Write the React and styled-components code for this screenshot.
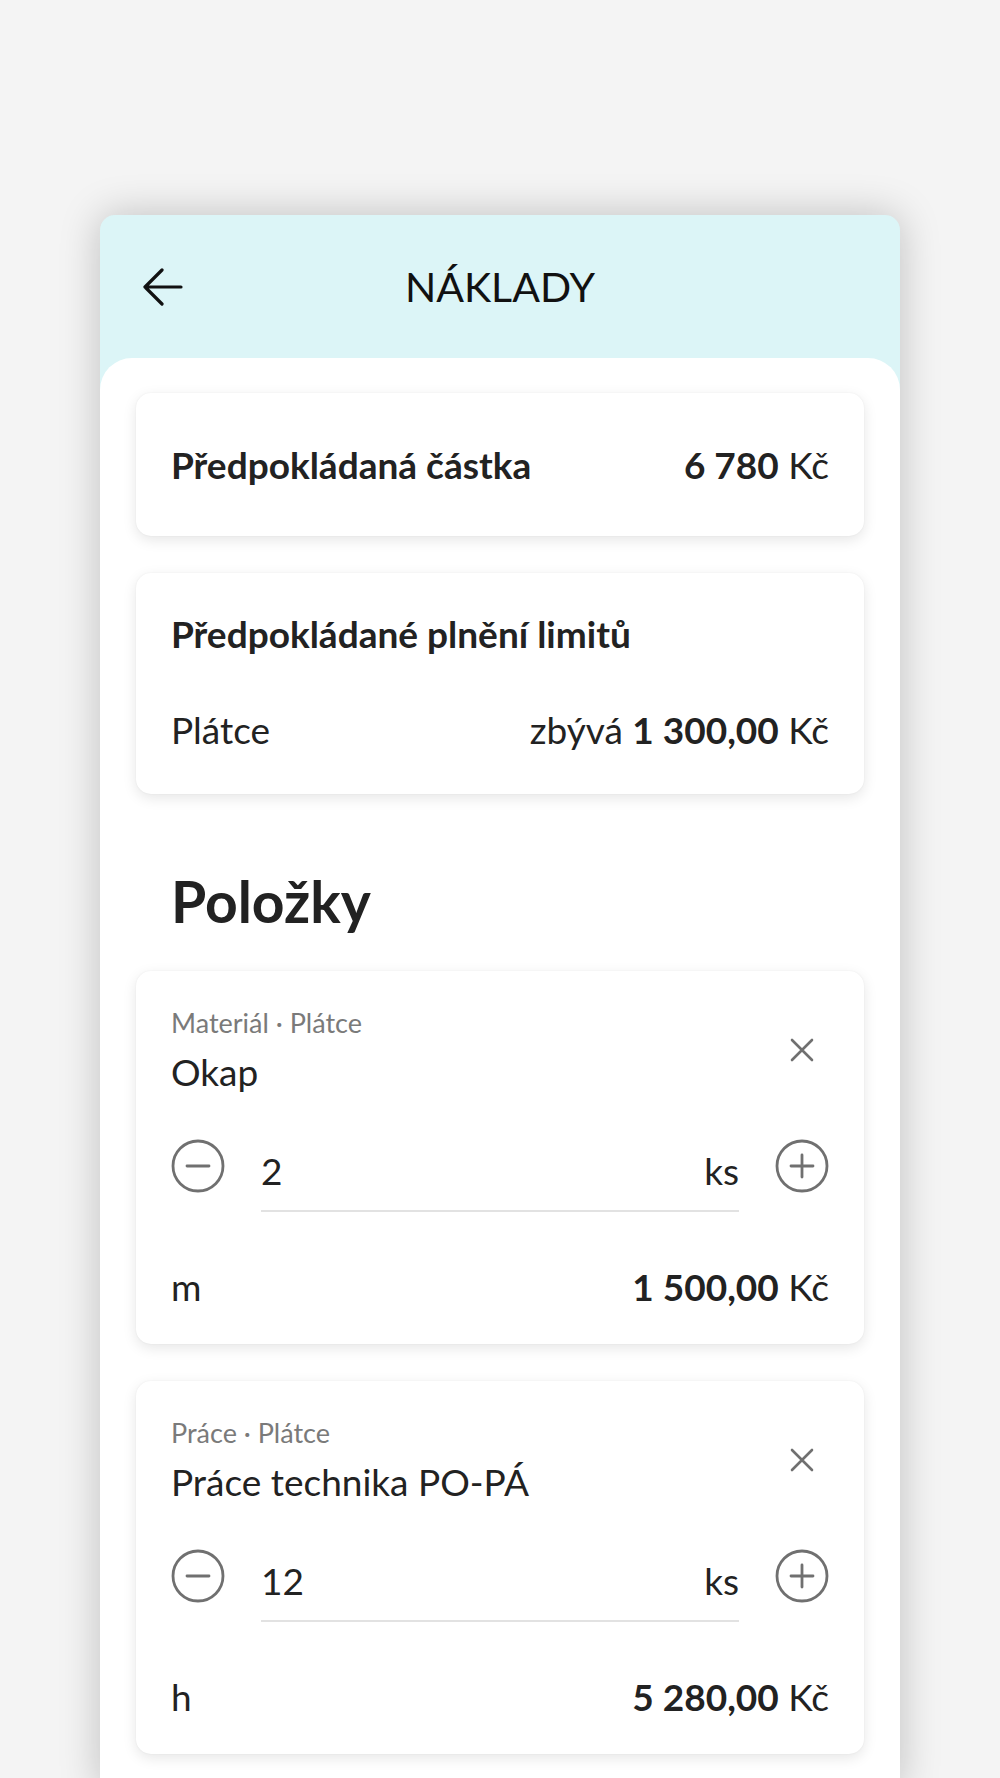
import React from 'react';
import styled, { createGlobalStyle } from 'styled-components';

const GlobalStyle = createGlobalStyle`
  html, body {
    margin: 0;
    padding: 0;
    background: #f4f4f4;
    font-family: Lato, "Noto Sans", sans-serif;
    color: #222;
  }
  * { box-sizing: border-box; }
`;

const Page = styled.div`
  padding-top: 215px;
  height: 1778px;
  overflow: hidden;
`;

const Phone = styled.div`
  width: 800px;
  margin: 0 auto;
  min-height: 1563px;
  background: #dcf5f7;
  border-radius: 15px 15px 0 0;
  box-shadow: 0 0 40px rgba(0, 0, 0, 0.22);
  display: flex;
  flex-direction: column;
`;

const Header = styled.header`
  height: 143px;
  display: flex;
  align-items: center;
  position: relative;
  padding: 0 43px;
`;

const BackButton = styled.button`
  border: none;
  background: none;
  padding: 0;
  display: flex;
  cursor: pointer;
`;

const Title = styled.h1`
  position: absolute;
  left: 0;
  right: 0;
  margin: 0;
  text-align: center;
  font-size: 41px;
  line-height: 48px;
  font-weight: 400;
  color: #111;
  pointer-events: none;
`;

const Sheet = styled.main`
  flex: 1;
  background: #fff;
  border-radius: 32px 32px 0 0;
  padding: 35px 36px;
  display: flex;
  flex-direction: column;
  gap: 37px;
`;

const Card = styled.section`
  background: #fff;
  border-radius: 15px;
  box-shadow: 0 4px 14px rgba(0, 0, 0, 0.1), 0 0 2px rgba(0, 0, 0, 0.06);
  padding: ${p => p.pad || '0 35px'};
`;

const Row = styled.div`
  display: flex;
  justify-content: space-between;
  align-items: center;
  font-size: 37px;
  line-height: ${p => p.lh || 40}px;
  margin-top: ${p => p.mt || 0}px;
`;

const Label = styled.span`
  font-weight: ${p => (p.bold ? 700 : 400)};
`;

const Amount = styled.span`
  white-space: nowrap;
  b { font-weight: 700; }
`;

const SectionTitle = styled.h2`
  margin: 37px 0 0;
  padding: 0 35px;
  font-size: 57px;
  line-height: 66px;
  font-weight: 700;
`;

const ItemHead = styled.div`
  display: flex;
  align-items: center;
  justify-content: space-between;
`;

const ItemText = styled.div`
  display: flex;
  flex-direction: column;
  gap: 14px;
`;

const Meta = styled.div`
  font-size: 27px;
  line-height: 30px;
  color: #7a7a7a;
`;

const ItemName = styled.div`
  font-size: 37px;
  line-height: 40px;
`;

const IconButton = styled.button`
  border: none;
  background: none;
  padding: 0;
  width: 54px;
  height: 54px;
  display: flex;
  align-items: center;
  justify-content: center;
  flex-shrink: 0;
  cursor: pointer;
`;

const Stepper = styled.div`
  display: flex;
  align-items: center;
  gap: 36px;
  margin-top: 28px;
`;

const Field = styled.div`
  flex: 1;
  display: flex;
  justify-content: space-between;
  align-items: baseline;
  padding: 31px 0 19px;
  border-bottom: 2px solid #e2e2e2;
  font-size: 37px;
  line-height: 40px;
`;

const ArrowIcon = () => (
  <svg width="40" height="38" viewBox="0 0 40 38" fill="none" stroke="#111" strokeWidth="3.2" strokeLinecap="round" strokeLinejoin="round">
    <path d="M38 19H2M19 2L2 19l17 17" />
  </svg>
);

const CloseIcon = () => (
  <svg width="24" height="24" viewBox="0 0 24 24" fill="none" stroke="#707070" strokeWidth="2.6" strokeLinecap="round">
    <path d="M2 2l20 20M22 2L2 22" />
  </svg>
);

const CircleIcon = ({ plus }) => (
  <svg width="54" height="54" viewBox="0 0 54 54" fill="none" stroke="#707070" strokeWidth="2.8" strokeLinecap="round">
    <circle cx="27" cy="27" r="25" />
    <path d="M16 27h22" />
    {plus && <path d="M27 16v22" />}
  </svg>
);

const items = [
  { id: 1, meta: 'Materiál · Plátce', name: 'Okap', qty: '2', unit: 'm', price: '1 500,00' },
  { id: 2, meta: 'Práce · Plátce', name: 'Práce technika PO-PÁ', qty: '12', unit: 'h', price: '5 280,00' },
];

const ItemCard = ({ item }) => (
  <Card pad="37px 35px 37px">
    <ItemHead>
      <ItemText>
        <Meta>{item.meta}</Meta>
        <ItemName>{item.name}</ItemName>
      </ItemText>
      <IconButton aria-label="Odebrat">
        <CloseIcon />
      </IconButton>
    </ItemHead>
    <Stepper>
      <IconButton aria-label="Ubrat">
        <CircleIcon />
      </IconButton>
      <Field>
        <span>{item.qty}</span>
        <span>ks</span>
      </Field>
      <IconButton aria-label="Přidat">
        <CircleIcon plus />
      </IconButton>
    </Stepper>
    <Row mt={55}>
      <Label>{item.unit}</Label>
      <Amount><b>{item.price}</b> Kč</Amount>
    </Row>
  </Card>
);

export default function App() {
  return (
    <>
      <GlobalStyle />
      <Page>
        <Phone>
          <Header>
            <BackButton aria-label="Zpět">
              <ArrowIcon />
            </BackButton>
            <Title>NÁKLADY</Title>
          </Header>
          <Sheet>
            <Card pad="50px 35px">
              <Row lh={43}>
                <Label bold>Předpokládaná částka</Label>
                <Amount><b>6 780</b> Kč</Amount>
              </Row>
            </Card>
            <Card pad="41px 35px 44px">
              <Row>
                <Label bold>Předpokládané plnění limitů</Label>
              </Row>
              <Row mt={56}>
                <Label>Plátce</Label>
                <Amount>zbývá <b>1 300,00</b> Kč</Amount>
              </Row>
            </Card>
            <SectionTitle>Položky</SectionTitle>
            {items.map(item => (
              <ItemCard key={item.id} item={item} />
            ))}
          </Sheet>
        </Phone>
      </Page>
    </>
  );
}
